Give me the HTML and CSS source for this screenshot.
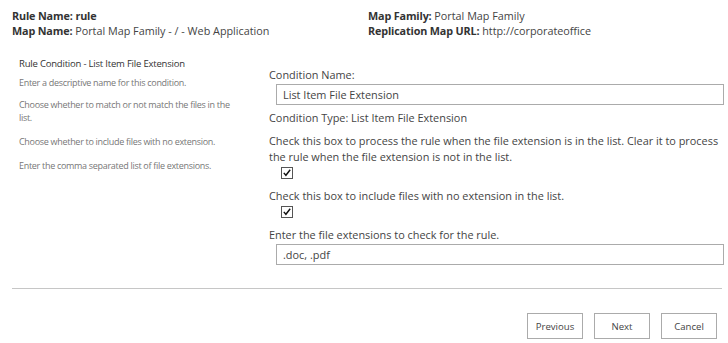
FILE: index.html
```html
<!DOCTYPE html>
<html lang="en">

<head>
    <meta charset="UTF-8">
    <title>Rule Condition</title>
    <link rel="stylesheet" href="styles.css">
</head>

<body>
    <div class="summary">
        <div class="summary-col">
            <div><b>Rule Name:</b> <b>rule</b></div>
            <div><b>Map Name:</b> Portal Map Family - / - Web Application</div>
        </div>
        <div class="summary-col">
            <div><b>Map Family:</b> Portal Map Family</div>
            <div><b>Replication Map URL:</b> http://corporateoffice</div>
        </div>
    </div>

    <div class="section">
        <div class="desc">
            <h3>Rule Condition - List Item File Extension</h3>
            <p class="d1">Enter a descriptive name for this condition.</p>
            <p class="d2">Choose whether to match or not match the files in the list.</p>
            <p class="d3">Choose whether to include files with no extension.</p>
            <p class="d4">Enter the comma separated list of file extensions.</p>
        </div>
        <div class="fields">
            <label class="lbl first">Condition Name:</label>
            <input class="txt" type="text" value="List Item File Extension">
            <div class="lbl type">Condition Type: List Item File Extension</div>
            <div class="lbl gap7">Check this box to process the rule when the file extension is in the list. Clear it to process the rule when the file extension is not in the list.</div>
            <span class="chk">
                <svg width="12" height="12" viewBox="0 0 12 12">
                    <rect x="0.5" y="0.5" width="11" height="11" fill="#fff" stroke="#555"/>
                    <path d="M2.8 5.9 L4.9 8.3 L9.2 2.8" fill="none" stroke="#111" stroke-width="1.4"/>
                </svg>
            </span>
            <div class="lbl gap9">Check this box to include files with no extension in the list.</div>
            <span class="chk">
                <svg width="12" height="12" viewBox="0 0 12 12">
                    <rect x="0.5" y="0.5" width="11" height="11" fill="#fff" stroke="#555"/>
                    <path d="M2.8 5.9 L4.9 8.3 L9.2 2.8" fill="none" stroke="#111" stroke-width="1.4"/>
                </svg>
            </span>
            <div class="lbl gap9">Enter the file extensions to check for the rule.</div>
            <input class="txt" type="text" value=".doc, .pdf">
        </div>
    </div>

    <hr class="sep">

    <div class="buttons">
        <button>Previous</button>
        <button>Next</button>
        <button>Cancel</button>
    </div>
</body>

</html>
```

FILE: styles.css
```css
* {
    margin: 0;
    padding: 0;
    box-sizing: border-box;
}

body {
    font-family: "Open Sans", Lato, sans-serif;
    font-size: 10.9px;
    color: #444;
    background: #fff;
    width: 728px;
}

b {
    color: #333;
    letter-spacing: -0.15px;
}

.summary {
    display: flex;
    padding: 8px 0 0 12px;
    line-height: 15px;
    font-size: 10.8px;
}

.summary-col {
    width: 356px;
}

.section {
    display: flex;
    margin-top: 19px;
}

.desc {
    width: 250px;
    padding-left: 19px;
    font-size: 9px;
    letter-spacing: -0.3px;
    color: #777;
}

.desc h3 {
    font-weight: normal;
    font-size: 9.5px;
    letter-spacing: -0.2px;
    color: #333;
    line-height: 14px;
}

.desc p {
    line-height: 13px;
    width: 218px;
}

.desc .d1 { margin-top: 5px; }
.desc .d2 { margin-top: 9px; }
.desc .d3 { margin-top: 11px; }
.desc .d4 { margin-top: 11px; }

.fields {
    flex: 1;
    display: flex;
    flex-direction: column;
    align-items: flex-start;
    padding: 10px 0 0 19px;
}

.lbl {
    display: block;
    line-height: 16px;
}

.lbl.type {
    margin-top: 5px;
}

.lbl.gap7 {
    margin-top: 7px;
}

.lbl.gap9 {
    margin-top: 9px;
}

.txt {
    width: 448px;
    height: 21px;
    margin: 1px 0 0 7px;
    border: 1px solid #ababab;
    font: inherit;
    color: #444;
    padding: 0 6px;
    outline: none;
}

.chk {
    display: block;
    width: 12px;
    height: 12px;
    margin: 2px 0 0 12px;
}

.chk svg {
    display: block;
}

.sep {
    border: 0;
    border-top: 1px solid #c6c6c6;
    margin: 23px 6px 0 12px;
}

.buttons {
    display: flex;
    justify-content: flex-end;
    gap: 11px;
    padding: 24px 11px 0 0;
}

.buttons button {
    width: 56px;
    height: 26px;
    border: 1px solid #ababab;
    background: #fff;
    font: inherit;
    font-size: 9.6px;
    color: #444;
}
```
